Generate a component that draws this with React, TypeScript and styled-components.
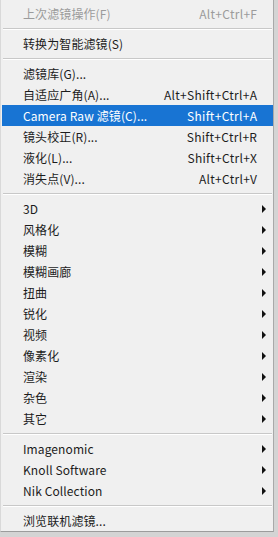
import React from "react";
import styled, { createGlobalStyle } from "styled-components";

const Global = createGlobalStyle`
  html, body { margin: 0; padding: 0; background: #d4d4d4; }
  body { width: 278px; height: 537px; overflow: hidden; }
`;

const Menu = styled.div`
  box-sizing: border-box;
  width: 274px;
  height: 532px;
  background: #f0f0f0;
  border-left: 1px solid #d9d9d9;
  border-right: 1px solid #a9a9a9;
  border-bottom: 1px solid #9c9c9c;
  padding: 3px 0 0 1px;
  font-family: "Noto Sans CJK SC", "Open Sans", sans-serif;
  font-size: 12px;
  color: #1c1c1c;
  display: flex;
  flex-direction: column;
`;

const Row = styled.div<{ $active?: boolean; $disabled?: boolean }>`
  height: 21px;
  display: grid;
  grid-template-columns: 1fr auto 16px;
  align-items: center;
  padding-left: 21px;
  background: ${(p) => (p.$active ? "#1874d3" : "transparent")};
  color: ${(p) => (p.$active ? "#ffffff" : p.$disabled ? "#9b9b9b" : "#1c1c1c")};
  white-space: nowrap;
  line-height: 21px;
`;

const Label = styled.span`
  letter-spacing: 0.1px;
`;

const Shortcut = styled.span`
  letter-spacing: 0.3px;
  margin-right: -0.3px;
`;

const ArrowCell = styled.span`
  display: flex;
  align-items: center;
  justify-content: flex-start;
  padding-left: 5px;
`;

const Tri = styled.span`
  width: 0;
  height: 0;
  border-top: 4px solid transparent;
  border-bottom: 4px solid transparent;
  border-left: 4px solid #111;
`;

const Sep = styled.div`
  height: 9px;
  display: flex;
  align-items: flex-start;
  padding: 4px 1px 0 1px;
  box-sizing: border-box;
  &::after {
    content: "";
    flex: 1;
    border-top: 1px solid #c8c8c8;
    border-bottom: 1px solid #ffffff;
    box-sizing: border-box;
    height: 2px;
  }
`;

type Item =
  | { sep: true }
  | { label: string; shortcut?: string; sub?: boolean; active?: boolean; disabled?: boolean; sep?: false };

const items: Item[] = [
  { label: "上次滤镜操作(F)", shortcut: "Alt+Ctrl+F", disabled: true },
  { sep: true },
  { label: "转换为智能滤镜(S)" },
  { sep: true },
  { label: "滤镜库(G)..." },
  { label: "自适应广角(A)...", shortcut: "Alt+Shift+Ctrl+A" },
  { label: "Camera Raw 滤镜(C)...", shortcut: "Shift+Ctrl+A", active: true },
  { label: "镜头校正(R)...", shortcut: "Shift+Ctrl+R" },
  { label: "液化(L)...", shortcut: "Shift+Ctrl+X" },
  { label: "消失点(V)...", shortcut: "Alt+Ctrl+V" },
  { sep: true },
  { label: "3D", sub: true },
  { label: "风格化", sub: true },
  { label: "模糊", sub: true },
  { label: "模糊画廊", sub: true },
  { label: "扭曲", sub: true },
  { label: "锐化", sub: true },
  { label: "视频", sub: true },
  { label: "像素化", sub: true },
  { label: "渲染", sub: true },
  { label: "杂色", sub: true },
  { label: "其它", sub: true },
  { sep: true },
  { label: "Imagenomic", sub: true },
  { label: "Knoll Software", sub: true },
  { label: "Nik Collection", sub: true },
  { sep: true },
  { label: "浏览联机滤镜..." },
];

export default function App() {
  return (
    <>
      <Global />
      <Menu>
        {items.map((it, i) =>
          it.sep ? (
            <Sep key={i} />
          ) : (
            <Row key={i} $active={it.active} $disabled={it.disabled}>
              <Label>{it.label}</Label>
              <Shortcut>{it.shortcut ?? ""}</Shortcut>
              <ArrowCell>{it.sub ? <Tri /> : null}</ArrowCell>
            </Row>
          )
        )}
      </Menu>
    </>
  );
}
